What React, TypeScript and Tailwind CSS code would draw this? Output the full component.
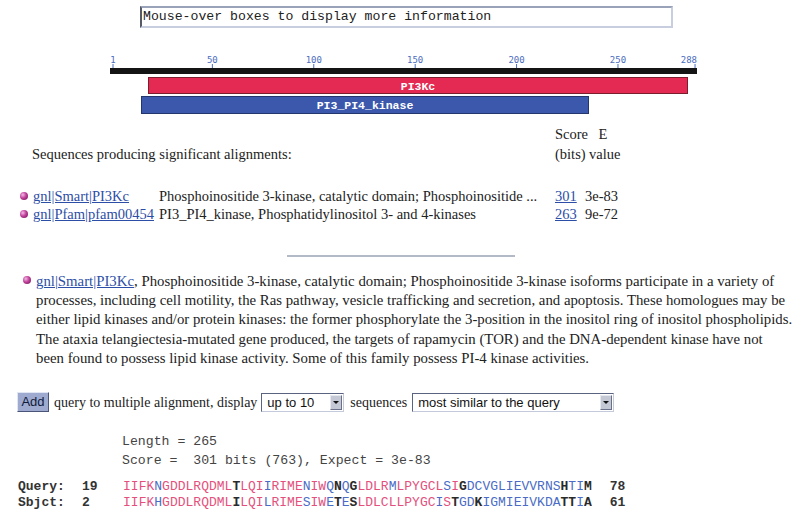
import React from "react";

const mono = "font-['Liberation_Mono','Courier_New',monospace]";
const serif = "font-['Liberation_Serif','Times_New_Roman',serif]";
const sans = "font-['Liberation_Sans',Arial,sans-serif]";

const hits = [
  {
    id: "gnl|Smart|PI3Kc",
    desc: "Phosphoinositide 3-kinase, catalytic domain; Phosphoinositide ...",
    score: "301",
    evalue: "3e-83",
  },
  {
    id: "gnl|Pfam|pfam00454",
    desc: "PI3_PI4_kinase, Phosphatidylinositol 3- and 4-kinases",
    score: "263",
    evalue: "9e-72",
  },
];

const summary = [
  ", Phosphoinositide 3-kinase, catalytic domain; Phosphoinositide 3-kinase isoforms participate in a variety of",
  "processes, including cell motility, the Ras pathway, vesicle trafficking and secretion, and apoptosis. These homologues may be",
  "either lipid kinases and/or protein kinases: the former phosphorylate the 3-position in the inositol ring of inositol phospholipids.",
  "The ataxia telangiectesia-mutated gene produced, the targets of rapamycin (TOR) and the DNA-dependent kinase have not",
  "been found to possess lipid kinase activity. Some of this family possess PI-4 kinase activities.",
];

// p = identical, b = similar, k = mismatch
const alignment = [
  {
    label: "Query:",
    start: "19",
    seq: "IIFKNGDDLRQDMLTLQIIRIMENIWQNQGLDLRMLPYGCLSIGDCVGLIEVVRNSHTIM",
    marks: "ppppbpppppppppkpppbppppbppbkbkppppbppppppbpkbbbbbbbbbbbbkbbk",
    end: "78",
  },
  {
    label: "Sbjct:",
    start: "2",
    seq: "IIFKHGDDLRQDMLILQILRIMESIWETESLDLCLLPYGCISTGDKIGMIEIVKDATTIA",
    marks: "ppppbpppppppppkpppbppppbppbkbkppppppppppbpkbbkbbbbbbbbbbkkbk",
    end: "61",
  },
];

const markClass: Record<string, string> = {
  p: "text-[#e4507c]",
  b: "text-[#4a6cc6]",
  k: "text-[#2a2a2a] font-bold",
};

const ticks = [
  { n: 1, label: "1" },
  { n: 50, label: "50" },
  { n: 100, label: "100" },
  { n: 150, label: "150" },
  { n: 200, label: "200" },
  { n: 250, label: "250" },
  { n: 288, label: "288" },
];

function Bullet() {
  return (
    <span className="inline-block h-[8px] w-[8px] rounded-full bg-[radial-gradient(circle_at_35%_35%,#f4b8e6_0%,#c0409a_45%,#6a1050_100%)]" />
  );
}

function DomainGraphic() {
  const x = (n: number) => 113 + (n - 1) * 2.028;
  return (
    <svg width="802" height="70" className="block">
      {ticks.map((t) => (
        <g key={t.n}>
          <text
            x={t.n === 288 ? 697 : x(t.n)}
            y={17}
            fontSize="9"
            fontFamily="DejaVu Sans Mono, monospace"
            fill="#4a6cc0"
            textAnchor={t.n === 288 ? "end" : "middle"}
          >
            {t.label}
          </text>
          <line x1={x(t.n)} x2={x(t.n)} y1={18} y2={22} stroke="#4a6cc0" strokeWidth="1" />
        </g>
      ))}
      <rect x="110" y="22" width="587" height="6" fill="#141414" />
      <rect x="148.5" y="31.5" width="539" height="16" fill="#e42a52" stroke="#7a1d2c" />
      <text
        x="418"
        y="43.5"
        fontSize="11.5"
        fontWeight="bold"
        fontFamily="Liberation Mono, monospace"
        fill="#fff"
        textAnchor="middle"
      >
        PI3Kc
      </text>
      <rect x="141.5" y="50.5" width="447" height="17" fill="#3b58ad" stroke="#24366e" />
      <text
        x="365"
        y="63"
        fontSize="11.5"
        fontWeight="bold"
        fontFamily="Liberation Mono, monospace"
        fill="#fff"
        textAnchor="middle"
      >
        PI3_PI4_kinase
      </text>
    </svg>
  );
}

function FakeSelect({ width, value }: { width: string; value: string }) {
  return (
    <div
      className={`flex h-[19px] items-center justify-between border border-t-[#5a6480] border-l-[#5a6480] border-r-[#c4cadc] border-b-[#c4cadc] bg-white pl-[5px] pr-[1px] ${width}`}
    >
      <span className={`${sans} text-[13px] leading-none text-[#111]`}>{value}</span>
      <span className="flex h-[15px] w-[12px] items-center justify-center border border-t-[#e6e8f0] border-l-[#e6e8f0] border-r-[#6a7088] border-b-[#6a7088] bg-[#c4c8d4]">
        <span className="h-0 w-0 border-x-[3px] border-t-[3px] border-x-transparent border-t-[#111]" />
      </span>
    </div>
  );
}

export default function App() {
  return (
    <div className={`h-[511px] w-[802px] overflow-hidden bg-white text-[#222] ${serif}`}>
      <div className="ml-[140px] mt-[6px] flex h-[22px] w-[533px] items-center border-2 border-t-[#9aa2ba] border-l-[#555a66] border-r-[#c8cee0] border-b-[#c8cee0] pl-[1px]">
        <span className={`${mono} text-[13.2px] text-[#222]`}>Mouse-over boxes to display more information</span>
      </div>

      <div className="mt-[18px]">
        <DomainGraphic />
      </div>

      <div className="mt-[8px] text-[14.5px] leading-[20px]">
        <div className="flex">
          <span className="w-[555px]" />
          <span className="w-[30px] whitespace-nowrap">Score</span>
          <span className="w-[36px] text-center">E</span>
        </div>
        <div className="flex whitespace-nowrap">
          <span className="w-[555px] pl-[32px]">Sequences producing significant alignments:</span>
          <span className="w-[34px]">(bits)</span>
          <span>value</span>
        </div>
      </div>

      <div className="mt-[23px] text-[14.5px] leading-[18px]">
        {hits.map((h) => (
          <div key={h.id} className="flex items-center whitespace-nowrap">
            <span className="flex w-[33px] justify-end pr-[5px]">
              <Bullet />
            </span>
            <a className="w-[126px] text-[#2d4ea6] underline">{h.id}</a>
            <span className="w-[396px]">{h.desc}</span>
            <a className="w-[30px] text-[#2d4ea6] underline">{h.score}</a>
            <span>{h.evalue}</span>
          </div>
        ))}
      </div>

      <div className="ml-[287px] mt-[32px] h-[2px] w-[228px] bg-[#b4b9c8]" />

      <div className="relative mt-[15px] pl-[36px] text-[14.8px] leading-[19.2px] whitespace-nowrap">
        <span className="absolute left-[23px] top-[-2px]">
          <Bullet />
        </span>
        <div>
          <a className="text-[#2d4ea6] underline">gnl|Smart|PI3Kc</a>
          {summary[0]}
        </div>
        {summary.slice(1).map((line) => (
          <div key={line}>{line}</div>
        ))}
      </div>

      <div className="ml-[17px] mt-[24px] flex h-[20px] items-center text-[14px]">
        <button className="flex h-[20px] w-[32px] items-center justify-center border border-t-[#e0e6f4] border-l-[#e0e6f4] border-r-[#4a5478] border-b-[#4a5478] bg-[#9eaad0]">
          <span className={`${sans} text-[13px] text-[#101a3a]`}>Add</span>
        </button>
        <span className="ml-[5px] mr-[4px] whitespace-nowrap">query to multiple alignment, display</span>
        <FakeSelect width="w-[83px]" value="up to 10" />
        <span className="ml-[6px] mr-[5px]">sequences</span>
        <FakeSelect width="w-[202px]" value="most similar to the query" />
      </div>

      <div className={`ml-[122px] mt-[20px] ${mono} text-[13.2px] leading-[19px] text-[#444] whitespace-pre`}>
        <div>Length = 265</div>
        <div>Score =  301 bits (763), Expect = 3e-83</div>
      </div>

      <div className={`mt-[9px] pl-[18px] ${mono} text-[13px] leading-[16px] whitespace-pre`}>
        {alignment.map((row) => (
          <div key={row.label} className="flex">
            <span className="w-[64px] font-bold text-[#333]">{row.label}</span>
            <span className="w-[41px] font-bold text-[#333]">{row.start}</span>
            <span>
              {row.seq.split("").map((c, i) => (
                <span key={i} className={markClass[row.marks[i]]}>
                  {c}
                </span>
              ))}
            </span>
            <span className="ml-[18px] font-bold text-[#333]">{row.end}</span>
          </div>
        ))}
      </div>
    </div>
  );
}
